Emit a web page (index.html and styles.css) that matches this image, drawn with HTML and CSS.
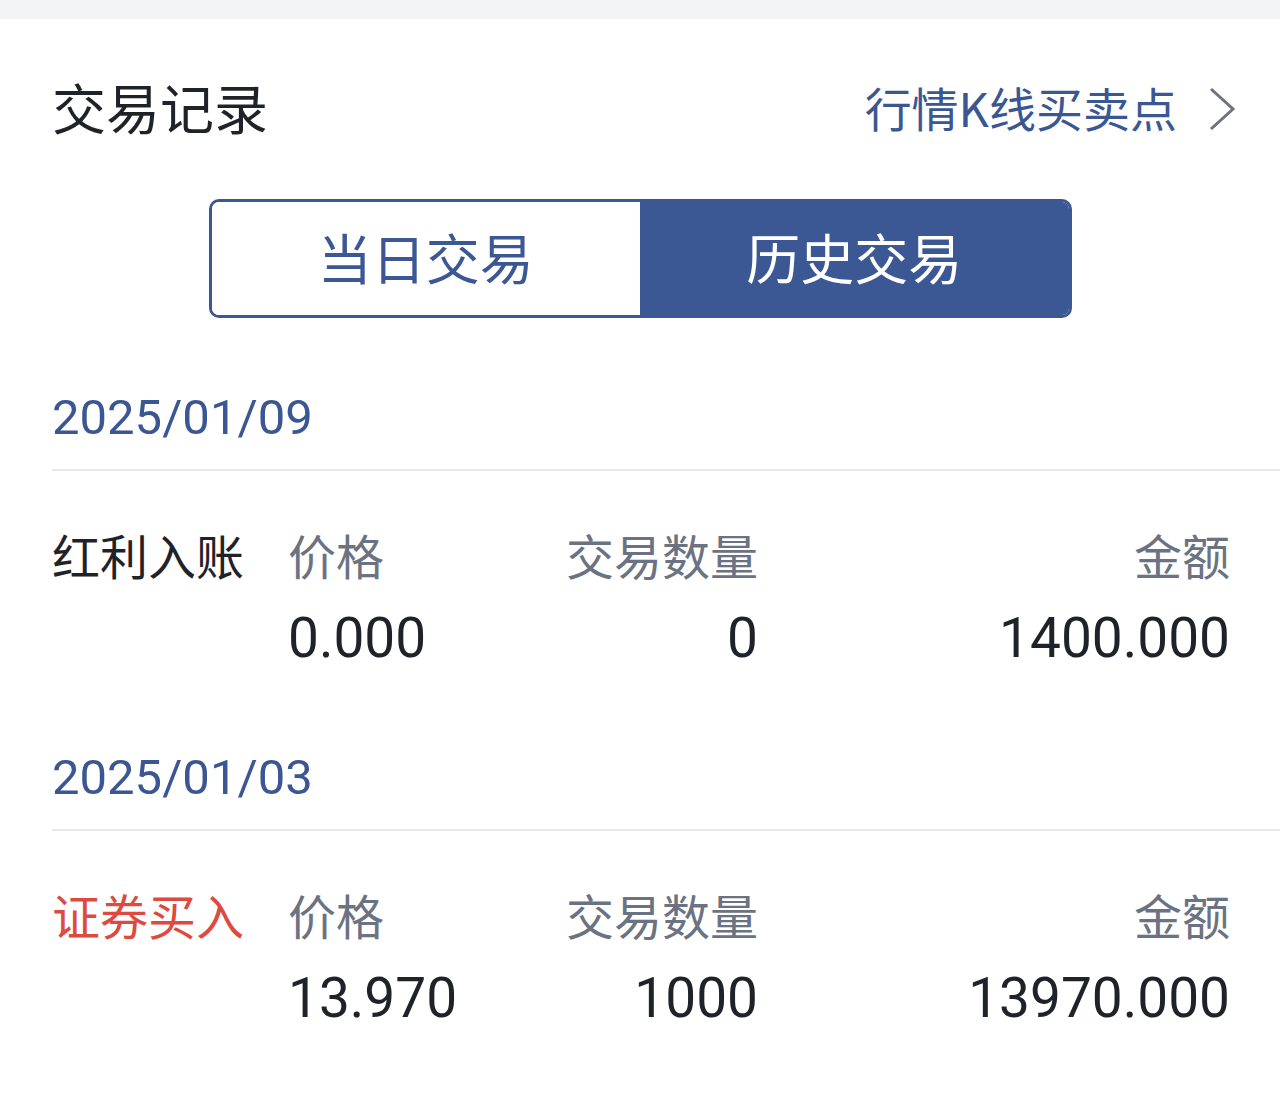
FILE: index.html
```html
<!DOCTYPE html>
<html lang="zh-CN">
<head>
<meta charset="utf-8">
<title>交易记录</title>
<link rel="stylesheet" href="styles.css">
</head>
<body>
<div class="topbar"></div>
<main class="page">
  <header class="header">
    <h1 class="title">交易记录</h1>
    <a class="link">
      <span>行情K线买卖点</span>
      <svg class="chev" width="30" height="46" viewBox="0 0 30 46"><polyline points="3,3 25,23 3,43" fill="none" stroke="#6b7280" stroke-width="3"/></svg>
    </a>
  </header>

  <div class="seg">
    <div class="seg-item">当日交易</div>
    <div class="seg-item active">历史交易</div>
  </div>

  <section class="day">
    <div class="day-date">2025/01/09</div>
    <div class="rec">
      <div class="type">红利入账</div>
      <div class="lbl">价格</div>
      <div class="lbl r">交易数量</div>
      <div class="lbl r">金额</div>
      <div></div>
      <div class="val">0.000</div>
      <div class="val r">0</div>
      <div class="val r">1400.000</div>
    </div>
  </section>

  <section class="day">
    <div class="day-date">2025/01/03</div>
    <div class="rec">
      <div class="type buy">证券买入</div>
      <div class="lbl">价格</div>
      <div class="lbl r">交易数量</div>
      <div class="lbl r">金额</div>
      <div></div>
      <div class="val">13.970</div>
      <div class="val r">1000</div>
      <div class="val r">13970.000</div>
    </div>
  </section>
</main>
</body>
</html>
```

FILE: styles.css
```css
* { box-sizing: border-box; }
html, body { margin: 0; padding: 0; background: #ffffff; }
body {
  font-family: "Noto Sans CJK SC", "Noto Sans", sans-serif;
  color: #1f2329;
  width: 1280px;
  overflow-x: hidden;
}
.topbar { height: 19px; background: #f3f4f6; }
.page { padding: 0 52px; }

.header {
  height: 180px;
  display: flex;
  align-items: center;
  justify-content: space-between;
}
.title {
  margin: 0 0 4px;
  font-size: 54px;
  font-weight: 400;
  line-height: 60px;
  color: #1f2329;
}
.link {
  display: flex;
  align-items: center;
  gap: 31px;
  margin-right: -10px;
  margin-bottom: 4px;
  font-size: 47px;
  line-height: 60px;
  color: #3b5793;
}
.chev { display: block; margin-top: 4px; }

.seg {
  width: 863px;
  height: 119px;
  margin: 0 auto;
  display: flex;
  border: 3px solid #3b5895;
  border-radius: 10px;
  overflow: hidden;
}
.seg-item {
  flex: 1;
  display: flex;
  align-items: center;
  justify-content: center;
  padding-bottom: 4px;
  font-size: 54px;
  color: #3b5895;
  background: #ffffff;
}
.seg-item.active { background: #3b5895; color: #ffffff; }

.day-date {
  font-family: Roboto, "Noto Sans", sans-serif;
  font-size: 49px;
  line-height: 60px;
  padding: 70px 0 21px;
  color: #3b5793;
  border-bottom: 2px solid #e8e8e8;
  margin-right: -52px;
}
.rec {
  display: grid;
  grid-template-columns: 236px 200px 270px 1fr;
  row-gap: 24px;
  padding: 53px 0 10px;
  margin-right: -2px;
}
.type { font-size: 48px; line-height: 60px; color: #1f2329; }
.type.buy { color: #dc4a40; }
.lbl { font-size: 48px; line-height: 60px; color: #6b7382; }
.val {
  font-family: Roboto, "Noto Sans", sans-serif;
  font-size: 55px;
  line-height: 60px;
  color: #1f2329;
}
.r { text-align: right; }
```
